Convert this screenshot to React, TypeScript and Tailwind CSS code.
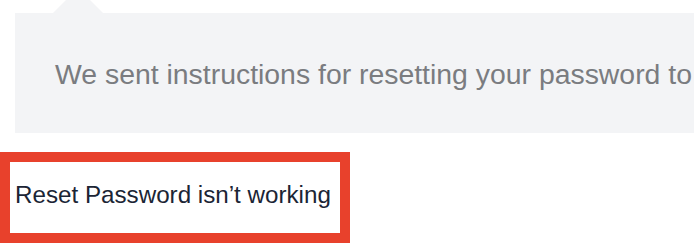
export default function App() {
  return (
    <div className="w-[694px] h-[246px] overflow-hidden bg-white pt-[13px] font-['Liberation_Sans',Arial,sans-serif]">
      <div className="relative ml-[15px] w-[720px] bg-[#f3f4f6] pl-[40px] pt-[45px] pb-[43px]">
        <div className="absolute left-[38px] top-[-25px] h-0 w-0 border-x-[25px] border-b-[25px] border-x-transparent border-b-[#f3f4f6]" />
        <p className="whitespace-nowrap text-[28.4px] leading-[32px] text-[#7a7c80]">
          We sent instructions for resetting your password to
        </p>
      </div>
      <div className="mt-[19px] w-[350px] border-[10px] border-[#e8412c] pl-[5px] pt-[15px] pb-[20px]">
        <span className="whitespace-nowrap text-[24.2px] leading-[36px] text-[#1b2535]">
          Reset Password isn’t working
        </span>
      </div>
    </div>
  );
}
